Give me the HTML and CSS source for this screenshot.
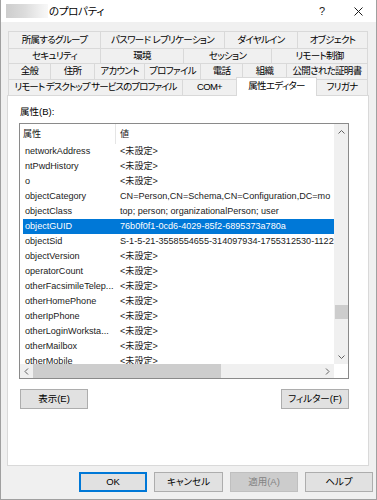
FILE: index.html
```html
<!DOCTYPE html>
<html lang="ja">
<head>
<meta charset="utf-8">
<title>プロパティ</title>
<link rel="stylesheet" href="styles.css">
</head>
<body>
<div class="window">
  <div class="titlebar">
    <div class="title-blur"></div>
    <div class="title-text">のプロパティ</div>
    <div class="tb-btn tb-help">?</div>
    <div class="tb-btn tb-close">
      <svg width="9" height="9" viewBox="0 0 9 9"><path d="M0.5 0.5 L8.5 8.5 M8.5 0.5 L0.5 8.5" stroke="#1a1a1a" stroke-width="1" fill="none"/></svg>
    </div>
  </div>

  <div class="tabs">
    <div class="tabrow r1">
      <div class="tab">所属するグループ</div>
      <div class="tab">パスワード レプリケーション</div>
      <div class="tab">ダイヤルイン</div>
      <div class="tab">オブジェクト</div>
    </div>
    <div class="tabrow r2">
      <div class="tab">セキュリティ</div>
      <div class="tab">環境</div>
      <div class="tab">セッション</div>
      <div class="tab">リモート制御</div>
    </div>
    <div class="tabrow r3">
      <div class="tab">全般</div>
      <div class="tab">住所</div>
      <div class="tab">アカウント</div>
      <div class="tab">プロファイル</div>
      <div class="tab">電話</div>
      <div class="tab">組織</div>
      <div class="tab">公開された証明書</div>
    </div>
    <div class="tabrow r4">
      <div class="tab tab-long">リモート デスクトップ サービスのプロファイル</div>
      <div class="tab">COM+</div>
      <div class="tab sel">属性エディター</div>
      <div class="tab">フリガナ</div>
    </div>
  </div>

  <div class="panel">
    <div class="label">属性(B):</div>
    <div class="list">
      <div class="list-content">
        <div class="list-head">
          <div class="h-name">属性</div>
          <div class="h-val">値</div>
        </div>
        <div class="row"><span class="name">networkAddress</span><span class="val">&lt;未設定&gt;</span></div>
        <div class="row"><span class="name">ntPwdHistory</span><span class="val">&lt;未設定&gt;</span></div>
        <div class="row"><span class="name">o</span><span class="val">&lt;未設定&gt;</span></div>
        <div class="row"><span class="name">objectCategory</span><span class="val">CN=Person,CN=Schema,CN=Configuration,DC=mo</span></div>
        <div class="row"><span class="name">objectClass</span><span class="val">top; person; organizationalPerson; user</span></div>
        <div class="row selected"><span class="name">objectGUID</span><span class="val">76b0f0f1-0cd6-4029-85f2-6895373a780a</span></div>
        <div class="row"><span class="name">objectSid</span><span class="val">S-1-5-21-3558554655-314097934-1755312530-1122</span></div>
        <div class="row"><span class="name">objectVersion</span><span class="val">&lt;未設定&gt;</span></div>
        <div class="row"><span class="name">operatorCount</span><span class="val">&lt;未設定&gt;</span></div>
        <div class="row"><span class="name">otherFacsimileTelep...</span><span class="val">&lt;未設定&gt;</span></div>
        <div class="row"><span class="name">otherHomePhone</span><span class="val">&lt;未設定&gt;</span></div>
        <div class="row"><span class="name">otherIpPhone</span><span class="val">&lt;未設定&gt;</span></div>
        <div class="row"><span class="name">otherLoginWorksta...</span><span class="val">&lt;未設定&gt;</span></div>
        <div class="row"><span class="name">otherMailbox</span><span class="val">&lt;未設定&gt;</span></div>
        <div class="row"><span class="name">otherMobile</span><span class="val">&lt;未設定&gt;</span></div>
      </div>
      <div class="vscroll">
        <div class="sb-btn">
          <svg width="7" height="5" viewBox="0 0 7 5"><polyline points="0.5,4.5 3.5,1.5 6.5,4.5" stroke="#606060" fill="none"/></svg>
        </div>
        <div class="v-track"><div class="v-thumb"></div></div>
        <div class="sb-btn">
          <svg width="7" height="5" viewBox="0 0 7 5"><polyline points="0.5,0.5 3.5,3.5 6.5,0.5" stroke="#606060" fill="none"/></svg>
        </div>
      </div>
      <div class="hscroll">
        <div class="sb-btn">
          <svg width="5" height="7" viewBox="0 0 5 7"><polyline points="4,0.5 1,3.5 4,6.5" stroke="#606060" fill="none"/></svg>
        </div>
        <div class="h-thumb"></div>
        <div class="h-track"></div>
        <div class="sb-btn">
          <svg width="5" height="7" viewBox="0 0 5 7"><polyline points="1,0.5 4,3.5 1,6.5" stroke="#606060" fill="none"/></svg>
        </div>
      </div>
    </div>
    <div class="pbtns">
      <button class="btn">表示(E)</button>
      <button class="btn">フィルター(F)</button>
    </div>
  </div>

  <div class="footer">
    <button class="btn btn-ok">OK</button>
    <button class="btn btn-cancel">キャンセル</button>
    <button class="btn btn-disabled">適用(A)</button>
    <button class="btn">ヘルプ</button>
  </div>
</div>
</body>
</html>
```

FILE: styles.css
```css
* { box-sizing: border-box; }

body {
  margin: 0;
  font-family: "Liberation Sans", "Noto Sans CJK JP", sans-serif;
  font-size: 9.5px;
  color: #000;
  background: #fff;
}

.window {
  width: 377px;
  height: 500px;
  background: #f0f0f0;
  border: 1px solid #a0a0a0;
  border-top: none;
  display: flex;
  flex-direction: column;
}

/* title bar */
.titlebar {
  height: 22px;
  background: #fff;
  display: flex;
  align-items: center;
  padding-left: 5px;
  flex-shrink: 0;
}
.title-blur {
  width: 42px;
  height: 14px;
  background: linear-gradient(90deg, #cdcdcd 0%, #dcdcdc 45%, #efefef 80%, #f8f8f8 100%);
  filter: blur(0.6px);
}
.title-text {
  font-family: "Noto Sans CJK JP", sans-serif;
  font-size: 10.5px;
  margin-left: 1px;
  font-feature-settings: "palt";
  letter-spacing: -0.3px;
  line-height: 1;
  color: #000;
}
.tb-btn {
  width: 36px;
  height: 22px;
  display: flex;
  align-items: center;
  justify-content: center;
}
.tb-help {
  margin-left: auto;
  font-size: 11px;
  color: #1a1a1a;
}

/* tabs */
.tabs {
  margin: 9px 0 0 7px;
  width: 360px;
  flex-shrink: 0;
}
.tabrow { display: grid; }
.r1 { grid-template-columns: 92px 124px 73px 71px; height: 17px; }
.r2 { grid-template-columns: 92px 83px 88px 97px; height: 15px; }
.r3 { grid-template-columns: 42px 44px 50px 56px 42px 44px 82px; height: 16px; }
.r4 { grid-template-columns: 174px 54px 80px 52px; height: 16px; }

.tab {
  border-top: 1px solid #d9d9d9;
  border-left: 1px solid #d9d9d9;
  display: flex;
  align-items: center;
  justify-content: center;
  white-space: nowrap;
  font-size: 9.5px;
  font-feature-settings: "palt";
  letter-spacing: -0.7px;
  line-height: 1;
  color: #000;
  padding-bottom: 1px;
}
.tab-long { letter-spacing: -0.95px; }
.tab:last-child { border-right: 1px solid #d9d9d9; }
.tab.sel {
  background: #fff;
  border-right: 1px solid #d9d9d9;
  margin: -2px -1px -1px 0;
  position: relative;
  z-index: 1;
  padding-bottom: 3px;
}

/* panel */
.panel {
  margin-left: 6px;
  width: 362px;
  height: 371px;
  background: #fff;
  border: 1px solid #d9d9d9;
  padding: 9px 0 0 11px;
  flex-shrink: 0;
}
.label {
  height: 14px;
  line-height: 14px;
  padding-left: 1px;
  margin-bottom: 4px;
}

.list {
  width: 330px;
  height: 256px;
  border: 1px solid #8a8a8a;
  background: #fff;
  display: grid;
  grid-template-columns: 314px 14px;
  grid-template-rows: 240px 14px;
}
.list-content {
  overflow: hidden;
  color: #1a1a1a;
  font-size: 9.1px;
}
.list-head {
  height: 20px;
  display: flex;
}
.h-name {
  width: 95px;
  padding-left: 3px;
  line-height: 20px;
}
.h-val {
  border-left: 1px solid #e5e5e5;
  padding-left: 4px;
  line-height: 20px;
}
.row {
  height: 15px;
  margin-left: 3px;
  width: 311px;
  display: flex;
  align-items: center;
  white-space: nowrap;
  overflow: hidden;
  line-height: 15px;
}
.row .name {
  width: 93px;
  flex-shrink: 0;
  padding-left: 2px;
  overflow: hidden;
}
.row .val {
  padding-left: 4px;
}
.row.selected {
  background: #0078d7;
  color: #fff;
}

.vscroll {
  background: #f0f0f0;
  display: flex;
  flex-direction: column;
}
.sb-btn {
  width: 14px;
  height: 14px;
  flex-shrink: 0;
  display: flex;
  align-items: center;
  justify-content: center;
}
.hscroll .sb-btn { width: 13px; }
.v-track { flex: 1; }
.v-thumb {
  margin-top: 167px;
  margin-left: 1px;
  height: 14px;
  background: #cdcdcd;
}
.hscroll {
  background: #f0f0f0;
  display: flex;
}
.h-thumb {
  width: 188px;
  background: #cdcdcd;
}
.h-track { flex: 1; }

.pbtns {
  display: flex;
  justify-content: space-between;
  width: 330px;
  margin-top: 10px;
  padding-left: 1px;
}

.btn {
  width: 68px;
  height: 20px;
  padding: 0;
  margin: 0;
  background: #e1e1e1;
  border: 1px solid #adadad;
  font-family: "Liberation Sans", "Noto Sans CJK JP", sans-serif;
  font-size: 9.5px;
  font-feature-settings: "palt";
  color: #000;
  display: flex;
  align-items: center;
  justify-content: center;
  line-height: 1;
}

.footer {
  margin-top: 6px;
  display: flex;
  justify-content: flex-end;
  gap: 7px;
  padding-right: 3px;
}
.btn-ok {
  border: 1px solid #0078d7;
  box-shadow: inset 0 0 0 1px #0078d7;
}
.btn-cancel { width: 69px; }
.btn-disabled {
  background: #cccccc;
  border-color: #bfbfbf;
  color: #838383;
}
```
